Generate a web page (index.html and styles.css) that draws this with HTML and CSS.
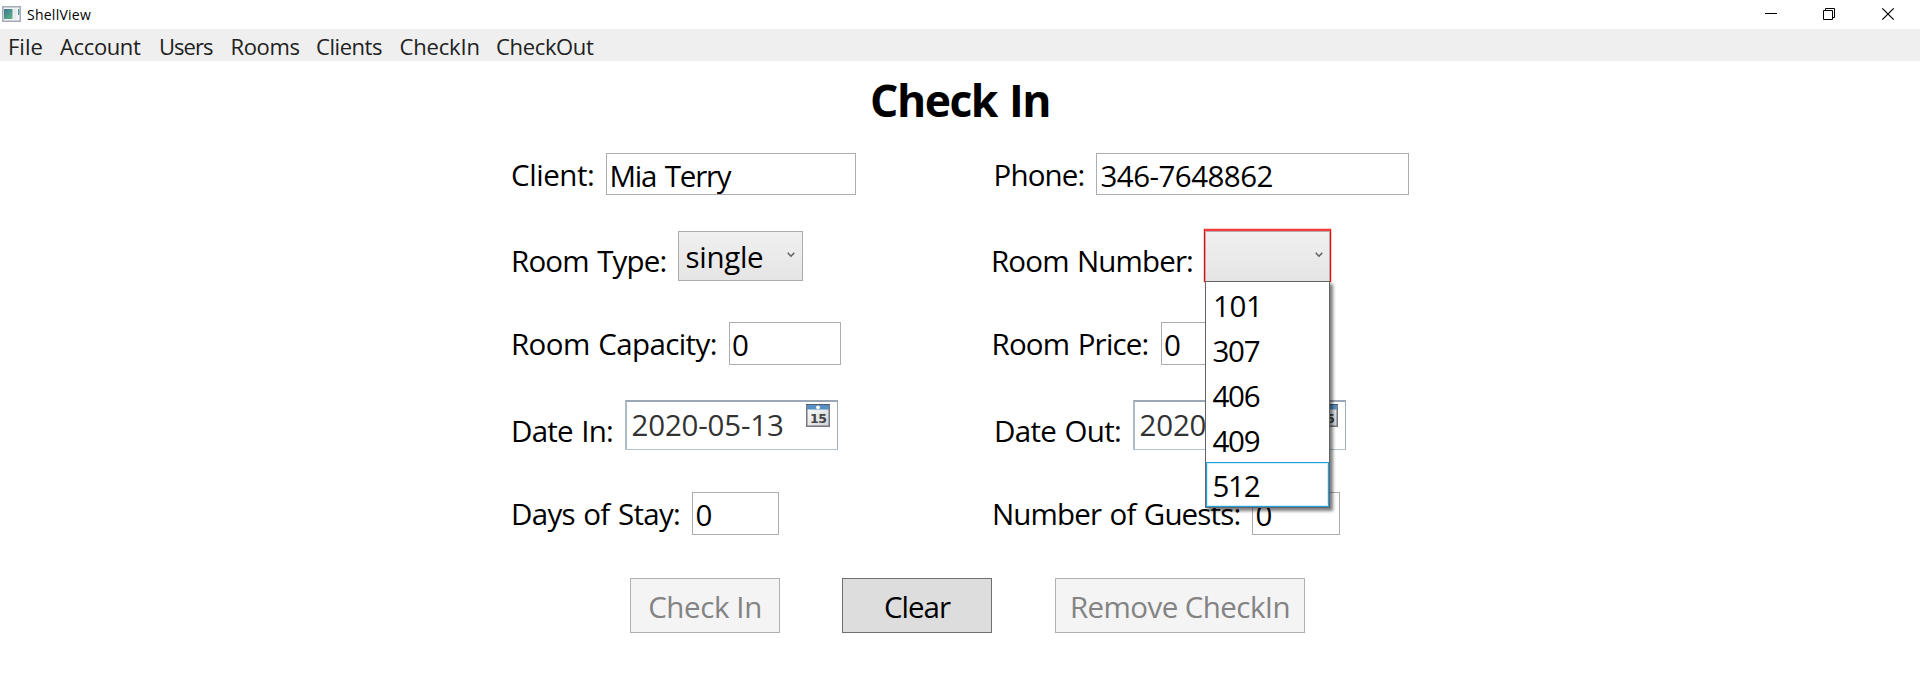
FILE: index.html
```
<!DOCTYPE html>
<html lang="en">
<head>
<meta charset="utf-8">
<title>ShellView</title>
<link rel="stylesheet" href="styles.css">
</head>
<body>
<header class="titlebar">
  <svg class="app-icon" width="19" height="16" viewBox="0 0 19 16">
    <defs><linearGradient id="app" x1="0" y1="0" x2="1" y2="1"><stop offset="0" stop-color="#3d7596"/><stop offset="1" stop-color="#5fb583"/></linearGradient></defs>
    <rect x=".75" y=".75" width="17.5" height="14.5" fill="#f3f4f6" stroke="#a5abb5" stroke-width="1.5"/>
    <rect x="2" y="3" width="8.5" height="10" fill="url(#app)"/>
    <rect x="11.5" y="3" width="3" height="10" fill="#e6e8eb"/>
    <rect x="16" y="3" width="1.3" height="6" fill="#4c9a8b"/>
  </svg>
  <span class="app-name">ShellView</span>
  <svg class="win-controls" width="132" height="29" viewBox="0 0 132 29" fill="none" stroke="#000">
    <path d="M0 13.5h12"/>
    <path d="M58.5 10.5h9v9h-9zM60.5 10.5v-2h9v9h-2"/>
    <path d="M117.3 8.300l11.400 11.400M128.700 8.300l-11.400 11.400" stroke-width="1.200"/>
  </svg>
</header>
<nav class="menu">
  <span class="m-file">File</span><span class="m-account">Account</span><span class="m-users">Users</span><span class="m-rooms">Rooms</span><span class="m-clients">Clients</span><span class="m-checkin">CheckIn</span><span class="m-checkout">CheckOut</span>
</nav>
<main>
  <h1>Check In</h1>
  <div class="row row-client">
    <div class="field"><span class="label l-client">Client:</span><div class="box b-client">Mia Terry</div></div>
    <div class="field"><span class="label l-phone">Phone:</span><div class="box b-phone">346-7648862</div></div>
  </div>
  <div class="row row-type">
    <div class="field"><span class="label l-type">Room Type:</span>
      <div class="box combo">single<svg class="chev" width="8" height="6" viewBox="0 0 8 6"><path d="M.7 .8L4 4.200 7.300 .8" fill="none" stroke="#606060" stroke-width="1.500"/></svg></div></div>
    <div class="field"><span class="label l-number">Room Number:</span>
      <div class="combo-wrap">
        <div class="combo invalid"><svg class="chev" width="8" height="6" viewBox="0 0 8 6"><path d="M.7 .8L4 4.200 7.300 .8" fill="none" stroke="#606060" stroke-width="1.500"/></svg></div>
        <div class="popup"><div class="n101">101</div><div>307</div><div>406</div><div>409</div><div class="hover">512</div></div>
      </div></div>
  </div>
  <div class="row row-capacity">
    <div class="field"><span class="label l-capacity">Room Capacity:</span><div class="box b-small">0</div></div>
    <div class="field"><span class="label l-price">Room Price:</span><div class="box b-small">0</div></div>
  </div>
  <div class="row row-date">
    <div class="field"><span class="label l-in">Date In:</span>
      <div class="box date">2020-05-13<svg class="cal" width="24" height="23" viewBox="0 0 24 23">
        <defs><linearGradient id="page" x1="0" y1="0" x2="1" y2="1"><stop offset="0" stop-color="#fff"/><stop offset="1" stop-color="#cfd2d6"/></linearGradient></defs>
        <rect x=".75" y=".75" width="22.500" height="21.500" fill="url(#page)" stroke="#74777b" stroke-width="1.500"/>
        <rect x="1" y="1" width="22" height="4.500" fill="#5791c3"/><path d="M0 .5h24" stroke="#52606d"/><circle cx="12" cy="3.300" r="1.900" fill="#fff"/>
        <text x="12.300" y="19" text-anchor="middle" class="cal-day">15</text></svg></div></div>
    <div class="field"><span class="label l-out">Date Out:</span>
      <div class="box date">2020-05-13<svg class="cal" width="24" height="23" viewBox="0 0 24 23">
        <rect x=".75" y=".75" width="22.500" height="21.500" fill="url(#page)" stroke="#74777b" stroke-width="1.500"/>
        <rect x="1" y="1" width="22" height="4.500" fill="#5791c3"/><path d="M0 .5h24" stroke="#52606d"/><circle cx="12" cy="3.300" r="1.900" fill="#fff"/>
        <text x="12.300" y="19" text-anchor="middle" class="cal-day">15</text></svg></div></div>
  </div>
  <div class="row row-days">
    <div class="field"><span class="label l-days">Days of Stay:</span><div class="box b-days">0</div></div>
    <div class="field"><span class="label l-guests">Number of Guests:</span><div class="box b-guests">0</div></div>
  </div>
  <div class="actions">
    <button class="btn check" disabled>Check In</button>
    <button class="btn clear">Clear</button>
    <button class="btn remove" disabled>Remove CheckIn</button>
  </div>
</main>
</body>
</html>
```

FILE: styles.css
```
* { box-sizing: border-box; }
body { margin: 0; background: #fff; color: #000; font-family: "Open Sans", "Noto Sans", sans-serif; height: 696px; overflow: hidden; }
.titlebar { display: flex; height: 29px; }
.app-icon { margin: 6px 0 0 2px; }
.app-name { margin-left: 6px; font-size: 14px; line-height: 20px; padding-top: 5px; letter-spacing: .25px; }
.win-controls { margin: 0 23px 0 auto; }

.menu { display: flex; height: 32px; background: #efefef; font-size: 22px; line-height: 32px; padding: 1px 0 0 8px; color: #212121; white-space: nowrap; }
.menu span { flex: none; height: 30px; }
.m-file { width: 52px; }
.m-account { width: 99px; letter-spacing: -.37px; }
.m-users { width: 71.500px; letter-spacing: -.95px; }
.m-rooms { width: 85.500px; letter-spacing: -.35px; }
.m-clients { width: 83.500px; letter-spacing: -.44px; }
.m-checkin { width: 96.500px; letter-spacing: -.16px; }
.m-checkout { letter-spacing: -.34px; }

main { font-size: 29.500px; line-height: 40px; letter-spacing: -.5px; }
h1 { margin: 0; height: 92px; padding-top: 8px; text-align: center; font-size: 44.500px; line-height: 61px; letter-spacing: -1.500px; word-spacing: 2px; }

.row { display: grid; grid-template-columns: 481px 440px; padding-left: 510px; }
.field { display: flex; align-items: flex-start; white-space: nowrap; }
.label { flex: none; padding-left: 1px; }
.row-client { height: 42px; margin-bottom: 36px; }
.row-type { height: 50px; margin-bottom: 41px; }
.row-capacity { height: 43px; margin-bottom: 35px; }
.row-date { height: 50px; margin-bottom: 42px; }
.row-days { height: 43px; margin-bottom: 43px; }
.row-client .label { padding-top: 2px; }
.row-type .label { padding-top: 10px; }
.row-capacity .label, .row-days .label { padding-top: 2px; }
.row-date .label { padding-top: 11px; }

.l-client { width: 96px; padding-left: 1px; letter-spacing: -.44px; }
.l-phone { width: 105px; padding-left: 2.500px; letter-spacing: -.85px; }
.l-type { width: 168px; letter-spacing: -.8px; word-spacing: 1.500px; }
.l-number { width: 213px; padding-left: 0; letter-spacing: -.85px; word-spacing: 1.500px; }
.l-capacity { width: 219px; letter-spacing: -.6px; word-spacing: 1.500px; }
.l-price { width: 170px; padding-left: .5px; letter-spacing: -.8px; word-spacing: 1.500px; }
.l-in { width: 115px; letter-spacing: -.75px; word-spacing: 1.500px; }
.l-out { width: 142px; padding-left: 3px; letter-spacing: -.7px; word-spacing: 1.500px; }
.l-days { width: 182px; letter-spacing: -.7px; word-spacing: 1.500px; }
.l-guests { width: 261px; padding-left: 1px; letter-spacing: -.85px; word-spacing: 1.500px; }

.box { position: relative; flex: none; height: 42px; border: 1px solid #abadb3; background: #fff; padding: 2px 0 0 2.500px; }
.b-client { width: 250px; letter-spacing: -1.200px; word-spacing: 2px; }
.b-phone { width: 313px; padding-left: 3.500px; letter-spacing: -.53px; }
.b-small { width: 112px; height: 43px; padding-left: 2px; }
.b-days { width: 87px; height: 43px; }
.b-guests { width: 88px; height: 43px; }

.combo { width: 125px; height: 50px; padding: 5px 0 0 6.500px; border: 1px solid #acacac; background: linear-gradient(#f0f0f0, #e5e5e5); letter-spacing: -.31px; }
.chev { position: absolute; right: 7px; top: 20px; }
.combo-wrap { position: relative; }
.invalid { position: relative; width: 127px; height: 53px; margin-top: -2px; border: 1px solid #f00; border-top: 2px solid #f53b3b; border-bottom-color: #e92a2a; box-shadow: inset 0 1px #b5acac, inset 1px 0 #b5acac, inset -1px 0 #b5acac, 0 0 0 .5px #ff9c9c; }
.invalid .chev { top: 21px; }
.popup { position: absolute; z-index: 2; left: 1px; top: 50px; width: 125px; height: 227px; border: 1px solid #646464; background: #fff; box-shadow: 3px 3px 3px rgba(0, 0, 0, .5); letter-spacing: -1.300px; }
.popup div { height: 45px; padding: 4px 0 0 6.500px; }
.popup .n101 { padding-left: 7px; letter-spacing: -.4px; }
.popup .hover { border: 1px solid #26a0da; padding: 3px 0 0 5.500px; box-shadow: inset 0 0 0 1px #d3edf9; }

.date { width: 213px; height: 50px; padding: 3px 0 0 4.500px; border: 2px solid; border-width: 2px 1px 1px 2px; border-color: #9aa7b4 #9eabb8 #b4c2d0 #aebbc8; color: #333; letter-spacing: -.17px; }
.cal { position: absolute; top: 2px; right: 7px; }
.cal-day { font: bold 12.500px "DejaVu Sans", sans-serif; letter-spacing: -.5px; fill: #444; }

.actions { display: flex; padding-left: 630px; }
.btn { flex: none; height: 55px; border: 1px solid #707070; background: #ddd; color: #000; font: inherit; padding: 2px 0 0; line-height: 40px; letter-spacing: -.4px; }
.btn:disabled { background: #f4f4f4; border-color: #adb2b5; color: #838383; }
.check { width: 150px; margin-right: 62px; }
.clear { width: 150px; margin-right: 63px; letter-spacing: -1px; }
.remove { width: 250px; letter-spacing: -.57px; }
```
